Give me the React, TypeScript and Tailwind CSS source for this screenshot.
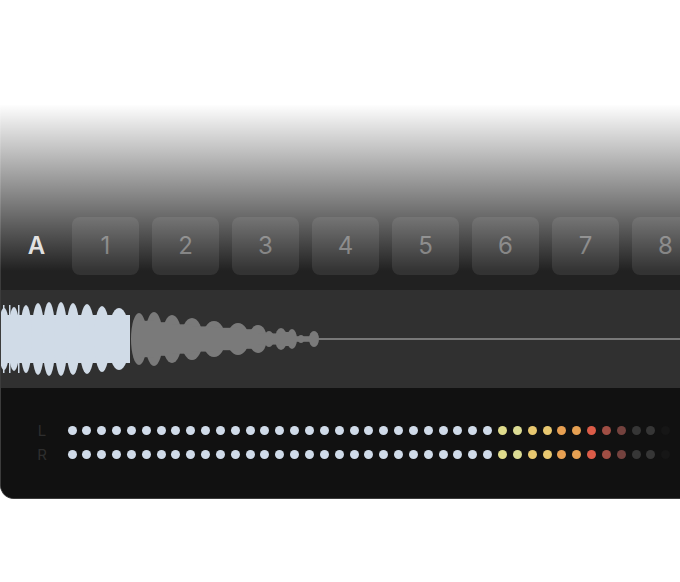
import React from "react";

const lightLobes: [number, number, number][] = [
  [3, 31, 6],
  [13, 32, 6],
  [25, 34, 6],
  [37, 36, 6.5],
  [48, 37, 6.5],
  [60, 37, 6.5],
  [72, 36, 7],
  [86, 35, 8],
  [101, 33, 8],
  [118, 31, 11],
];

const grayLobes: [number, number, number][] = [
  [138, 26, 8],
  [153, 27, 9],
  [171, 24, 10],
  [191, 21, 11],
  [213, 18, 11.5],
  [237, 16, 11],
  [257, 14, 9],
  [268, 8, 5],
  [280, 11, 6],
  [291, 10, 5],
  [300, 4, 3],
  [313, 8, 5],
];

const dotColors: string[] = [
  ...Array(29).fill("#d0dbe9"),
  "#e0dc8c",
  "#dcdc94",
  "#e8c870",
  "#e8c870",
  "#e8a052",
  "#e6a052",
  "#dc5c48",
  "#a04e44",
  "#74423e",
  "#363636",
  "#363636",
  "#161616",
];

function Waveform() {
  const cy = 49;
  return (
    <svg width="720" height="98" viewBox="0 0 720 98" className="block">
      <rect x="310" y={cy - 1} width="410" height="2" fill="#787878" />
      {grayLobes.map(([x, hh, rx], i) => (
        <ellipse key={"g" + i} cx={x} cy={cy} rx={rx} ry={hh} fill="#7a7a7a" />
      ))}
      {grayLobes.slice(0, -1).map(([x, hh], i) => {
        const [x2, hh2] = grayLobes[i + 1];
        const h = Math.min(hh, hh2) * 0.7;
        return <rect key={"gn" + i} x={x} y={cy - h} width={x2 - x} height={h * 2} fill="#7a7a7a" />;
      })}
      <rect x="0" y={cy - 24} width="129" height="48" fill="#d0dbe7" />
      {lightLobes.map(([x, hh, rx], i) => (
        <ellipse key={"l" + i} cx={x} cy={cy} rx={rx} ry={hh} fill="#d0dbe7" />
      ))}
      {[2, 8, 17].map((x, i) => (
        <rect key={"s" + i} x={x} y={cy - 34} width="1.5" height="68" fill="#d0dbe7" />
      ))}
    </svg>
  );
}

function MeterRow({ label }: { label: string }) {
  return (
    <div className="flex items-center h-[9px]">
      <div className="w-[12px] shrink-0 text-center text-[15px] leading-none text-[#2e2e2e]">{label}</div>
      <div className="ml-[19.5px] flex gap-[5.85px]">
        {dotColors.map((c, i) => (
          <div key={i} className="w-[9px] h-[9px] shrink-0 rounded-full" style={{ backgroundColor: c }} />
        ))}
      </div>
    </div>
  );
}

export default function App() {
  return (
    <div
      className="relative w-[680px] h-[582px] bg-white overflow-hidden"
      style={{ fontFamily: "Inter, 'Liberation Sans', sans-serif" }}
    >
      <div className="mt-[105px] w-[760px] h-[394px] rounded-b-[14px] border-l border-b border-[#3c3c3c] bg-[#111111] overflow-hidden flex flex-col">
        <div className="h-[185px] shrink-0 bg-[#212121] flex flex-col justify-end pb-[15px]">
          <div className="flex items-center h-[58px]">
            <div className="w-[71px] shrink-0 text-center text-[24px] font-semibold text-[#dcdcdc] leading-none">A</div>
            <div className="flex gap-[13px]">
              {["1", "2", "3", "4", "5", "6", "7", "8"].map((n) => (
                <div
                  key={n}
                  className="w-[67px] h-[58px] shrink-0 rounded-[8px] bg-[#333333] flex items-center justify-center text-[24px] text-[#777777] leading-none"
                >
                  {n}
                </div>
              ))}
            </div>
          </div>
        </div>
        <div className="h-[98px] shrink-0 bg-[#303030]">
          <Waveform />
        </div>
        <div className="flex-1 bg-[#111111] pt-[38px] flex flex-col gap-[15px]">
          <div className="pl-[35px]">
            <MeterRow label="L" />
          </div>
          <div className="pl-[35px]">
            <MeterRow label="R" />
          </div>
        </div>
      </div>
      <div className="absolute left-0 top-[104px] w-full h-[167px] bg-gradient-to-b from-white to-transparent pointer-events-none" />
    </div>
  );
}
